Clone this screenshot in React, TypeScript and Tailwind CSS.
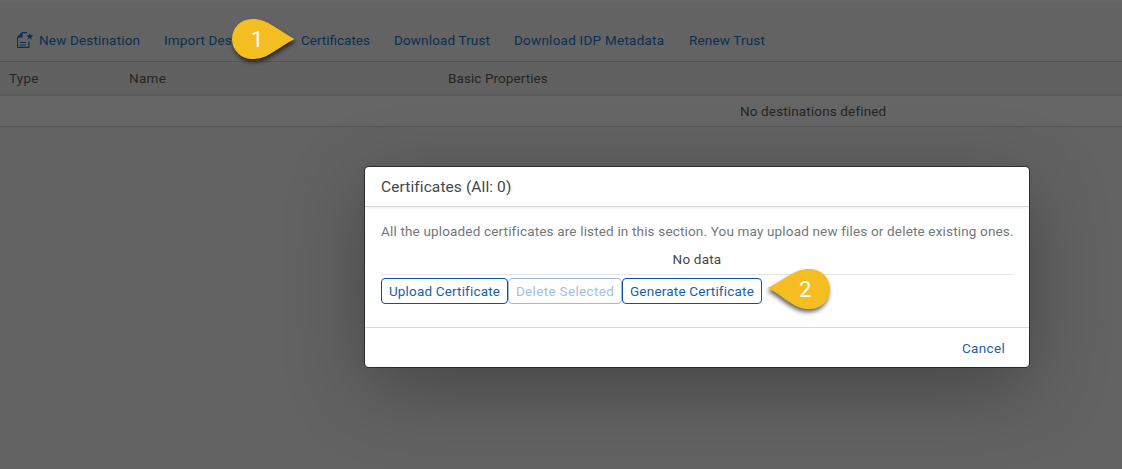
import React from "react";

const NewDestinationIcon = () => (
  <svg width="17" height="17" viewBox="0 0 17 17" className="shrink-0" fill="none">
    <path d="M10 .6H5.500L.6 5.300V15.400H11.900V9.500" stroke="#0a2f50" strokeWidth="1.1" />
    <path d="M5.500.3v5.200H.3z" fill="#0a2f50" />
    <path d="M3 10.500h6M3 13h6" stroke="#0a2f50" strokeWidth="1.1" />
    <path d="M12.900 1l.8 2.300h2.700l-2.100 1.600.8 2.500-2.200-1.500-2.200 1.500.8-2.500-2.100-1.600h2.700z" fill="#0a2f50" />
  </svg>
);

function Toolbar() {
  return (
    <div className="flex h-[62px] items-center border-t-2 border-b border-t-[#666666] border-b-[#535353] bg-[#636363] pt-[17px] whitespace-nowrap text-[#0b2f50]">
      <div className="flex w-[164px] items-center gap-[5px] pl-[17px]">
        <NewDestinationIcon />
        <span className="tracking-[0.17px]">New Destination</span>
      </div>
      <span className="w-[137px] tracking-[0.15px]">Import Destination</span>
      <span className="w-[93px]">Certificates</span>
      <span className="w-[120px] tracking-[0.14px]">Download Trust</span>
      <span className="w-[175px] tracking-[0.24px]">Download IDP Metadata</span>
      <span className="tracking-[0.16px]">Renew Trust</span>
    </div>
  );
}

function DestinationTable() {
  return (
    <div className="text-[#252525]">
      <div className="flex h-[34px] items-center border-b-2 border-[#5c5c5c] bg-[#616161] pl-[9px]">
        <span className="w-[120px] tracking-[0.25px]">Type</span>
        <span className="w-[319px] tracking-[0.3px]">Name</span>
        <span className="tracking-[0.08px]">Basic Properties</span>
      </div>
      <div className="flex h-[31px] items-center border-b border-[#535353] bg-[#666666] pl-[740px]">
        <span className="tracking-[0.14px]">No destinations defined</span>
      </div>
    </div>
  );
}

function CertificatesDialog() {
  return (
    <div className="absolute top-[167px] left-[365px] h-[200px] w-[664px] rounded-[4px] bg-white text-[#43474b] shadow-[0_0_0_1px_rgba(0,0,0,0.5),0_20px_80px_rgba(0,0,0,0.3)]">
      <div className="flex h-10 items-center border-b border-[#d9d9d9] px-4 text-[15.5px] shadow-[0_1px_2px_rgba(0,0,0,0.08)]">
        <span className="tracking-[0.1px]">Certificates (All: 0)</span>
      </div>
      <div className="flex h-[120px] flex-col px-4 pt-[14px]">
        <span className="h-5 leading-5 tracking-[0.165px] whitespace-nowrap text-[#74777a]">
          All the uploaded certificates are listed in this section. You may upload new files or delete existing ones.
        </span>
        <div className="mt-1 flex h-[30px] justify-center border-b border-[#e5e5e5] pt-[4px] leading-5 tracking-[0.2px]">No data</div>
        <div className="mt-[3px] flex h-[26px] whitespace-nowrap text-[#1a60a7]">
          <button className="w-[127px] rounded-[4px] border border-[#0854a0] tracking-[0.17px]">Upload Certificate</button>
          <button className="w-[114px] rounded-[4px] border border-[#9cbbd9] tracking-[0.33px] text-[#a3c0dc]" disabled>
            Delete Selected
          </button>
          <button className="w-[140px] rounded-[4px] border border-[#0854a0] tracking-[0.2px]">Generate Certificate</button>
        </div>
      </div>
      <div className="flex h-10 items-center justify-end border-t border-[#d9d9d9] pr-6 text-[#1a60a7]">
        <button className="tracking-[0.33px]">Cancel</button>
      </div>
    </div>
  );
}

export default function App() {
  return (
    <div className="relative h-[469px] w-[1122px] overflow-hidden bg-[#636363] font-[Roboto,sans-serif] text-[13.5px] leading-5">
      <Toolbar />
      <DestinationTable />
      <CertificatesDialog />
      <div className="absolute top-[19px] left-[232px] h-10 w-[63px]">
        <svg width="63" height="40" viewBox="0 0 63 40" className="absolute overflow-visible drop-shadow-[1px_3px_2px_rgba(0,0,0,0.6)]">
          <path d="M62.5 20C53 15 43 7 33 2.500C28 .3 24 0 20 0A20 20 0 0 0 20 40C25 40 29 39.500 34 37.300C44 32 53 25 62.500 20Z" fill="#f4bd22" />
        </svg>
        <span className="absolute top-[9px] left-[19px] font-[Roboto,sans-serif] text-[22px] leading-6 text-white">1</span>
      </div>
      <div className="absolute top-[269px] left-[768px] h-10 w-[62px]">
        <svg width="62" height="40" viewBox="0 0 62 40" className="absolute overflow-visible drop-shadow-[-1px_3px_2px_rgba(0,0,0,0.6)]">
          <path d="M0 19C10 14 20 6 30 2C34 .4 38 0 42 0A20 20 0 0 1 42 40C37 40 33 39.500 28 37C18 32 10 24 0 19Z" fill="#f4bd22" />
        </svg>
        <span className="absolute top-[9px] left-[31px] font-[Roboto,sans-serif] text-[22px] leading-6 text-white">2</span>
      </div>
    </div>
  );
}
